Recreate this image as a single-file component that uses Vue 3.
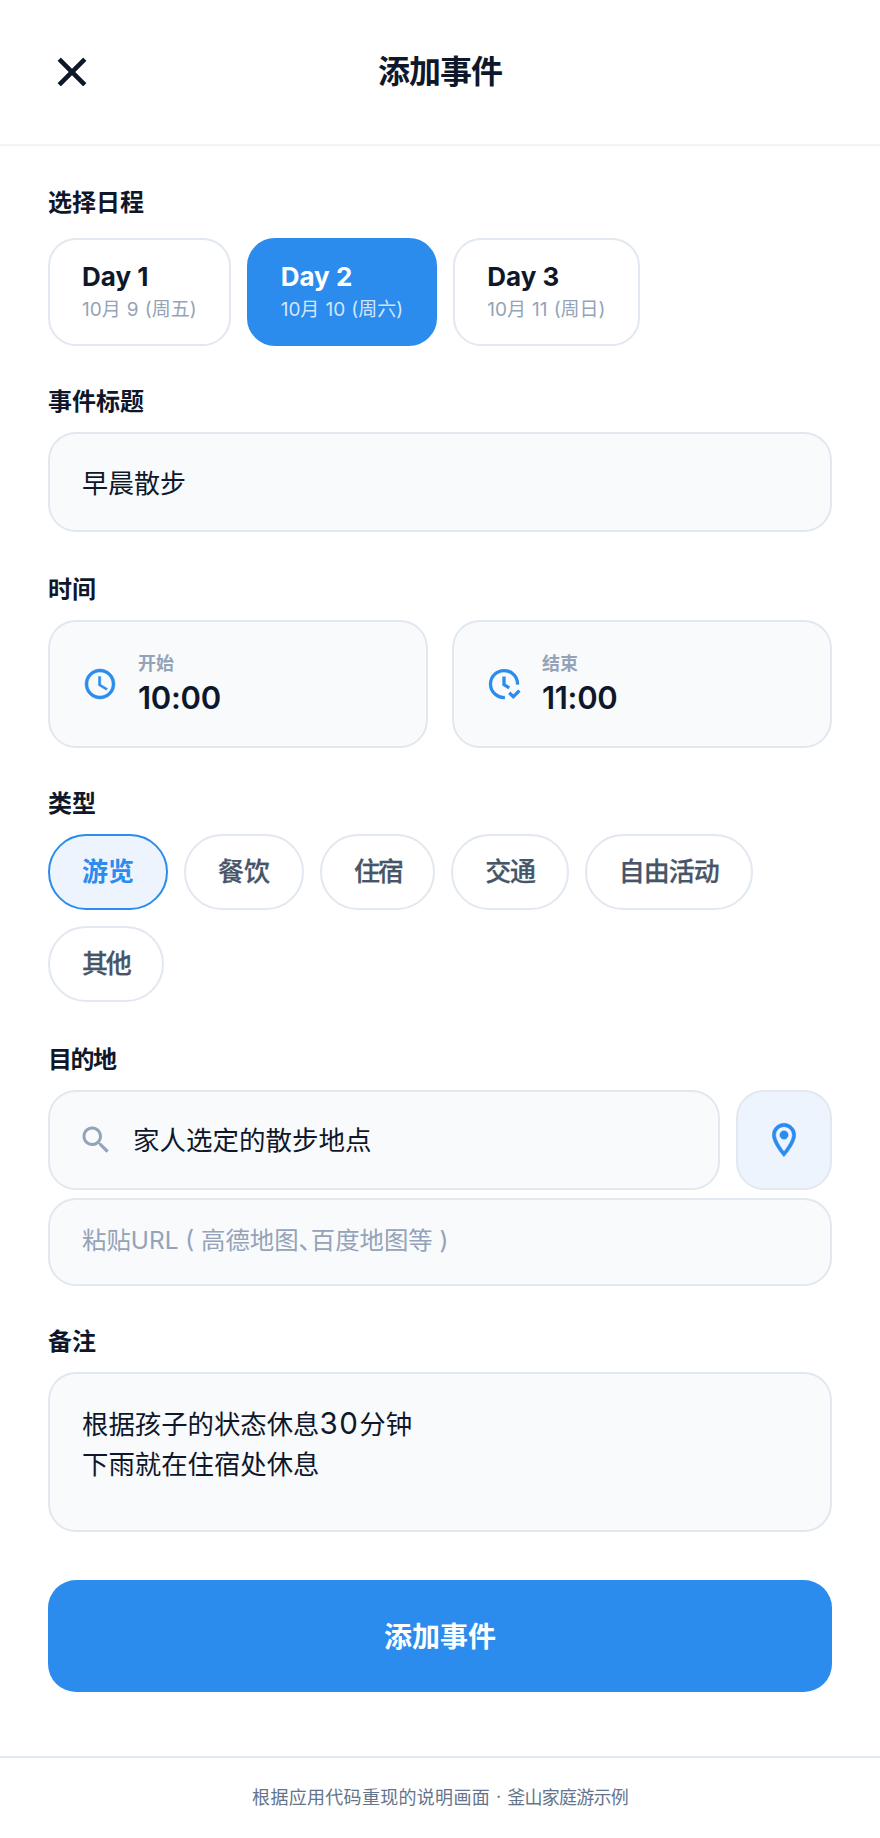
<script setup>
import { ref } from 'vue'

const days = [
  { id: 1, title: 'Day 1', date: '10月 9 (周五)' },
  { id: 2, title: 'Day 2', date: '10月 10 (周六)' },
  { id: 3, title: 'Day 3', date: '10月 11 (周日)' }
]
// spacing: the reference sets some of these labels tighter than others
const types = [
  { name: '游览', spacing: 0 },
  { name: '餐饮', spacing: 0 },
  { name: '住宿', spacing: -2.4 },
  { name: '交通', spacing: -1.2 },
  { name: '自由活动', spacing: -1 },
  { name: '其他', spacing: -2.2 }
]

const activeDay = ref(2)
const activeType = ref('游览')
const title = ref('早晨散步')
const place = ref('家人选定的散步地点')
const url = ref('')
</script>

<template>
  <div class="page">
    <header class="topbar">
      <button class="close" aria-label="关闭">
        <svg viewBox="0 0 24 24" width="48" height="48"><path d="M19 6.41L17.59 5 12 10.59 6.41 5 5 6.41 10.59 12 5 17.59 6.41 19 12 13.41 17.59 19 19 17.59 13.41 12z" /></svg>
      </button>
      <h1>添加事件</h1>
    </header>

    <main class="form">
      <section>
        <h2 class="label first">选择日程</h2>
        <div class="days">
          <button
            v-for="day in days"
            :key="day.id"
            class="day"
            :class="{ active: activeDay === day.id }"
            @click="activeDay = day.id"
          >
            <span class="day-title">{{ day.title }}</span>
            <span class="day-date">{{ day.date }}</span>
          </button>
        </div>
      </section>

      <section>
        <h2 class="label">事件标题</h2>
        <input v-model="title" class="field title-input" />
      </section>

      <section class="wide-top">
        <h2 class="label">时间</h2>
        <div class="times">
          <div class="time">
            <svg class="blue thick" viewBox="0 0 24 24" width="36" height="36"><path d="M11.99 2C6.47 2 2 6.48 2 12s4.47 10 9.99 10C17.52 22 22 17.52 22 12S17.52 2 11.99 2zM12 20c-4.42 0-8-3.58-8-8s3.58-8 8-8 8 3.58 8 8-3.58 8-8 8zm.5-13H11v6l5.25 3.15.75-1.23-4.5-2.67z" /></svg>
            <div class="time-text">
              <div class="time-label">开始</div>
              <div class="time-value">10:00</div>
            </div>
          </div>
          <div class="time">
            <svg class="stroke" viewBox="0 0 24 24" width="36" height="36">
              <path d="M12.6 21A9 9 0 1 1 21 12.4" />
              <path d="M12 7v5.4l3.5 2.2" />
              <path d="M15.5 17.8l2.7 2.6 4.1-4" />
            </svg>
            <div class="time-text">
              <div class="time-label">结束</div>
              <div class="time-value">11:00</div>
            </div>
          </div>
        </div>
      </section>

      <section>
        <h2 class="label">类型</h2>
        <div class="chips">
          <button
            v-for="type in types"
            :key="type.name"
            class="chip"
            :class="{ active: activeType === type.name }"
            :style="{ letterSpacing: type.spacing + 'px' }"
            @click="activeType = type.name"
          >{{ type.name }}</button>
        </div>
      </section>

      <section class="wide-top">
        <h2 class="label tight">目的地</h2>
        <div class="place-row">
          <div class="search">
            <svg class="muted" viewBox="0 0 24 24" width="36" height="36"><path d="M15.5 14h-.79l-.28-.27C15.41 12.59 16 11.11 16 9.5 16 5.91 13.09 3 9.5 3S3 5.91 3 9.5 5.91 16 9.5 16c1.61 0 3.09-.59 4.23-1.57l.27.28v.79l5 4.99L20.49 19l-4.99-5zm-6 0C7.01 14 5 11.99 5 9.5S7.01 5 9.5 5 14 7.01 14 9.5 11.99 14 9.5 14z" /></svg>
            <input v-model="place" />
          </div>
          <button class="pin" aria-label="地图选点">
            <svg class="blue thick" viewBox="0 0 24 24" width="40" height="40"><path d="M12 2C8.13 2 5 5.13 5 9c0 5.25 7 13 7 13s7-7.75 7-13c0-3.87-3.13-7-7-7zM7 9c0-2.76 2.24-5 5-5s5 2.24 5 5c0 2.88-2.88 7.19-5 9.88C9.92 16.21 7 11.85 7 9z" /><circle cx="12" cy="9" r="2.5" /></svg>
          </button>
        </div>
        <input v-model="url" class="field url-input" placeholder="粘贴URL ( 高德地图、百度地图等 )" />
      </section>

      <section>
        <h2 class="label">备注</h2>
        <div class="field memo" contenteditable="true">根据孩子的状态休息<span class="digits">30</span>分钟<br />下雨就在住宿处休息</div>
      </section>

      <button class="submit">添加事件</button>
    </main>

    <footer class="note">
      <span class="note-main">根据应用代码重现的说明画面</span>
      <span>·</span>
      <span class="note-sub">釜山家庭游示例</span>
    </footer>
  </div>
</template>

<style>
html,
body {
  background: #fff;
}
</style>

<style scoped>
.page {
  width: 880px;
  height: 1838px;
  display: flex;
  flex-direction: column;
  background: #fff;
  color: #0f172a;
  font-family: Inter, "Noto Sans CJK SC", sans-serif;
}

button,
input {
  font: inherit;
  color: inherit;
  margin: 0;
  box-sizing: border-box;
}

button {
  cursor: pointer;
  background: none;
}

svg {
  display: block;
  flex: none;
  fill: currentColor;
}

.blue {
  color: #2b8cee;
}

.muted {
  color: #94a3b8;
}

.thick {
  stroke: currentColor;
  stroke-width: 0.3;
}

.stroke {
  fill: none;
  stroke: #2b8cee;
  stroke-width: 2.2;
}

.topbar {
  position: relative;
  height: 146px;
  flex: none;
  box-sizing: border-box;
  border-bottom: 2px solid #f1f5f9;
  display: flex;
  align-items: center;
  justify-content: center;
}

.topbar h1 {
  margin: 0;
  font-size: 32px;
  line-height: 44px;
  font-weight: 700;
  letter-spacing: -1px;
}

.close {
  position: absolute;
  left: 48px;
  top: 48px;
  padding: 0;
  border: 0;
  color: #0f172a;
}

.close svg {
  stroke: currentColor;
  stroke-width: 0.4;
}

.form {
  padding: 0 48px;
  flex: 1;
}

section {
  margin-top: 40px;
}

section:first-child {
  margin-top: 41px;
}

section.wide-top {
  margin-top: 42px;
}

.label {
  margin: 0 0 14px;
  font-size: 24px;
  line-height: 32px;
  font-weight: 700;
}

.label.first {
  margin-bottom: 19px;
}

.label.tight {
  letter-spacing: -1.5px;
}

.days {
  display: flex;
  gap: 16px;
}

.day {
  height: 108px;
  padding: 0 32px 3px;
  border: 2px solid #e2e8f0;
  border-radius: 28px;
  display: flex;
  flex-direction: column;
  justify-content: center;
  align-items: flex-start;
  gap: 2px;
  background: #fff;
}

.day.active {
  background: #2b8cee;
  border-color: #2b8cee;
  color: #fff;
}

.day-title {
  font-size: 26px;
  line-height: 36px;
  font-weight: 700;
}

.day-date {
  font-size: 19px;
  line-height: 26px;
  word-spacing: 0.8px;
  color: #94a3b8;
}

.day.active .day-date {
  color: rgba(255, 255, 255, 0.8);
}

.field {
  display: block;
  width: 100%;
  box-sizing: border-box;
  background: #f8fafc;
  border: 2px solid #e2e8f0;
  border-radius: 28px;
  outline: none;
}

.title-input {
  height: 100px;
  padding: 0 32px 2px;
  font-size: 26px;
}

.times {
  display: flex;
  gap: 24px;
}

.time {
  flex: 1;
  height: 128px;
  box-sizing: border-box;
  padding: 0 32px;
  background: #f8fafc;
  border: 2px solid #e2e8f0;
  border-radius: 28px;
  display: flex;
  align-items: center;
  gap: 20px;
}

.time-text {
  margin-top: 1px;
}

.time-label {
  font-size: 18px;
  line-height: 26px;
  font-weight: 600;
  color: #94a3b8;
}

.time-value {
  font-size: 31px;
  line-height: 42px;
  font-weight: 600;
  letter-spacing: -0.3px;
}

.chips {
  display: flex;
  flex-wrap: wrap;
  gap: 16px;
}

.chip {
  height: 76px;
  padding: 0 32px 6px;
  border: 2px solid #e2e8f0;
  border-radius: 38px;
  background: #fff;
  font-size: 26px;
  font-weight: 500;
  -webkit-text-stroke: 0.25px currentColor;
  color: #475569;
}

.chip.active {
  background: #eef4fd;
  border-color: #2b8cee;
  color: #2b8cee;
  font-weight: 700;
  -webkit-text-stroke: 0;
}

.place-row {
  display: flex;
  gap: 16px;
  margin-bottom: 8px;
}

.search {
  flex: 1;
  height: 100px;
  box-sizing: border-box;
  padding: 0 32px 0 28px;
  background: #f8fafc;
  border: 2px solid #e2e8f0;
  border-radius: 28px;
  display: flex;
  align-items: center;
  gap: 19px;
}

.search input {
  flex: 1;
  min-width: 0;
  padding: 0 0 4px;
  border: 0;
  outline: none;
  background: none;
  font-size: 26.5px;
}

.pin {
  width: 96px;
  height: 100px;
  padding: 0;
  background: #eef4fd;
  border: 2px solid #e2e8f0;
  border-radius: 28px;
  display: flex;
  align-items: center;
  justify-content: center;
}

.url-input {
  height: 88px;
  padding: 0 32px 4px;
  font-size: 24.4px;
  font-feature-settings: "palt";
}

.url-input::placeholder {
  color: #94a3b8;
  opacity: 1;
}

.memo {
  height: 160px;
  padding: 29px 32px;
  font-size: 26.4px;
  line-height: 40px;
}

.digits {
  font-size: 29.5px;
  letter-spacing: 1.5px;
}

.submit {
  display: block;
  width: 100%;
  height: 112px;
  margin-top: 48px;
  padding: 0 0 2px;
  border: 0;
  border-radius: 28px;
  background: #2b8cee;
  color: #fff;
  font-size: 28px;
  font-weight: 700;
}

.note {
  height: 82px;
  flex: none;
  box-sizing: border-box;
  border-top: 2px solid #e2e8f0;
  padding-bottom: 4px;
  display: flex;
  align-items: center;
  justify-content: center;
  gap: 6px;
  font-size: 18px;
  color: #64748b;
}

.note-main {
  letter-spacing: 0.3px;
}

.note-sub {
  letter-spacing: -0.75px;
}
</style>
